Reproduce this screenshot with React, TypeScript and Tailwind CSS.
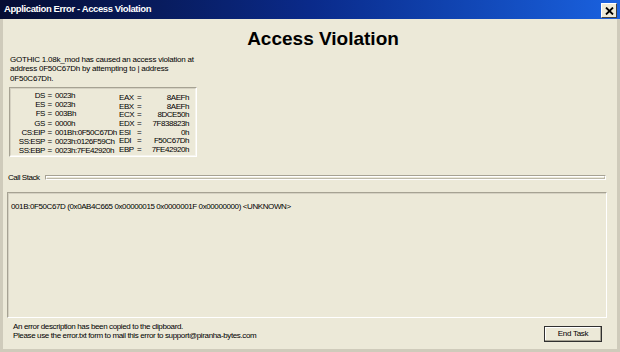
import React from "react";

const sans = "font-['Liberation_Sans',Arial,sans-serif]";

const leftRegs: [string, string][] = [
  ["DS", "0023h"],
  ["ES", "0023h"],
  ["FS", "003Bh"],
  ["GS", "0000h"],
  ["CS:EIP", "001Bh:0F50C67Dh"],
  ["SS:ESP", "0023h:0126F59Ch"],
  ["SS:EBP", "0023h:7FE42920h"],
];

const rightRegs: [string, string][] = [
  ["EAX", "8AEFh"],
  ["EBX", "8AEFh"],
  ["ECX", "8DCE50h"],
  ["EDX", "7F838823h"],
  ["ESI", "0h"],
  ["EDI", "F50C67Dh"],
  ["EBP", "7FE42920h"],
];

export default function App() {
  return (
    <div className={`w-[620px] h-[352px] overflow-hidden flex flex-col bg-[#ece9d8] text-black ${sans}`}>
      {/* title bar */}
      <div className="h-[19px] shrink-0 flex items-center justify-between bg-gradient-to-r from-[#050d33] via-[#0a2a8a] to-[#1a62e0] pl-[4px] pr-[3px]">
        <span className="whitespace-nowrap text-[9.5px] tracking-[-0.4px] font-bold text-white">
          Application Error - Access Violation
        </span>
        <div className="w-[16px] h-[15px] mt-[2px] flex items-center justify-center bg-[#ece9d8] border border-t-white border-l-white border-r-[#404040] border-b-[#404040]">
          <svg width="9" height="8" viewBox="0 0 9 8">
            <path d="M1 0.5 L8 7.5 M8 0.5 L1 7.5" stroke="#000" strokeWidth="1.8" />
          </svg>
        </div>
      </div>

      {/* body */}
      <div className="flex-1 flex flex-col text-[8px] leading-[9px] tracking-[-0.45px] border-l-[3px] border-r-[3px] border-b-[3px] border-[#cfcbbb]">
        <div className="h-[36px] shrink-0 flex items-center justify-center pl-[26px] pt-[2px] tracking-normal">
          <h1 className="text-[19px] font-bold">Access Violation</h1>
        </div>

        <div className="ml-[7px] leading-[9.3px] tracking-[-0.22px] whitespace-nowrap">
          <div>GOTHIC 1.08k_mod has caused an access violation at</div>
          <div>address 0F50C67Dh by attempting to | address</div>
          <div>0F50C67Dh.</div>
        </div>

        {/* registers */}
        <div className="ml-[6px] mt-[4px] w-[188px] h-[70px] shrink-0 border border-t-[#a6a293] border-l-[#a6a293] border-r-white border-b-white">
          <div className="h-full flex border border-t-[#d5d1c2] border-l-[#d5d1c2] border-r-[#f6f4ec] border-b-[#f6f4ec] whitespace-nowrap">
            <div className="w-[108px] flex flex-col pt-[2px] leading-[9.2px]">
              {leftRegs.map(([k, v]) => (
                <div key={k} className="flex">
                  <div className="w-[34px] text-right">{k}</div>
                  <div className="w-[9px] text-center">=</div>
                  <div className="pl-[1px]">{v}</div>
                </div>
              ))}
            </div>
            <div className="flex-1 flex flex-col pt-[5px] pr-[6px] leading-[8.7px]">
              {rightRegs.map(([k, v]) => (
                <div key={k} className="flex">
                  <div className="w-[18px]">{k}</div>
                  <div className="w-[6px]">=</div>
                  <div className="flex-1 text-right">{v}</div>
                </div>
              ))}
            </div>
          </div>
        </div>

        {/* call stack separator */}
        <div className="mt-[16px] flex items-center pl-[5px] pr-[11px]">
          <div className="w-[37px] whitespace-nowrap">Call Stack</div>
          <div className="flex-1 h-[5px] border border-t-[#a6a293] border-l-[#a6a293] border-r-white border-b-white">
            <div className="h-full border border-t-white border-l-white border-r-[#bcb8a8] border-b-[#bcb8a8]" />
          </div>
        </div>

        <div className="mt-[10px] ml-[4px] mr-[10px] h-[126px] shrink-0 border border-t-[#a6a293] border-l-[#a6a293] border-r-white border-b-white">
          <div className="h-full border-t border-l border-[#d5d1c2] pl-[2px] pt-[8px] tracking-[-0.4px] whitespace-nowrap">
            001B:0F50C67D (0x0AB4C665 0x00000015 0x0000001F 0x00000000) &lt;UNKNOWN&gt;
          </div>
        </div>

        <div className="flex items-start justify-between pl-[10px] pr-[15px] mt-[4px]">
          <div className="flex flex-col leading-[9px] tracking-[-0.37px] whitespace-nowrap">
            <div>An error description has been copied to the clipboard.</div>
            <div>Please use the error.txt form to mail this error to support@piranha-bytes.com</div>
          </div>
          <button className="w-[58px] h-[16px] mt-[4px] border border-[#303030] bg-[#ece9d8] leading-none tracking-[-0.3px] shadow-[inset_-1px_-1px_0_#a6a293,inset_1px_1px_0_#ffffff]">
            End Task
          </button>
        </div>
      </div>
    </div>
  );
}
